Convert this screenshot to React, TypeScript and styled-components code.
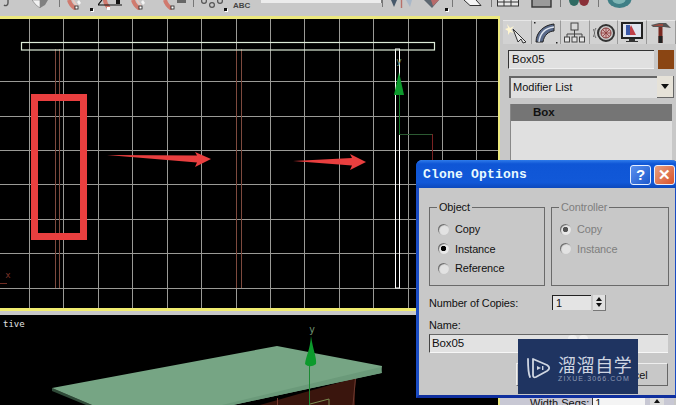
import styled, { createGlobalStyle } from "styled-components";

const GlobalStyle = createGlobalStyle`
  html, body {
    margin: 0;
    padding: 0;
    background: #000;
    overflow: hidden;
  }
  #root {
    width: 676px;
    height: 405px;
  }
`;

const GRID_X = [29, 63, 98, 132, 167, 201, 236, 270, 304, 339, 373, 408, 442, 476];
const GRID_Y = [81, 116, 150, 184, 219, 253, 288];

function TopViewCanvas() {
  return (
    <svg width="498" height="289" viewBox="0 19 498 289">
      {GRID_X.map((x) => (
        <line key={x} x1={x + 0.5} y1="19" x2={x + 0.5} y2="308" stroke="#9a9a96" />
      ))}
      {GRID_Y.map((y) => (
        <line key={y} x1="0" y1={y + 0.5} x2="498" y2={y + 0.5} stroke="#9a9a96" />
      ))}

      {[55, 59, 236, 241].map((x) => (
        <line key={x} x1={x + 0.5} y1="49" x2={x + 0.5} y2="288" stroke="#7e4a3e" />
      ))}
      <rect x="395.5" y="49" width="4" height="239" fill="none" stroke="#fff" />
      <rect x="21.5" y="42.5" width="413" height="7.5" fill="none" stroke="#dcebd8" strokeWidth="1.2" />

      <text x="399" y="64" fill="#6f8f6f" fontFamily="'DejaVu Sans Mono', monospace" fontSize="9" textAnchor="middle">y</text>
      <path d="M399 72 L394 95 L404 95 Z" fill="#0c9a2c" />
      <line x1="399.5" y1="95" x2="399.5" y2="134" stroke="#157a2a" />
      <path d="M399 134.5 H432" fill="none" stroke="#2c5a32" />
      <line x1="432.5" y1="134" x2="432.5" y2="160" stroke="#7a2222" />

      <text x="8" y="278" fill="#7c3328" fontFamily="'DejaVu Sans Mono', monospace" fontSize="9" textAnchor="middle">x</text>
      <line x1="0" y1="283.5" x2="7" y2="283.5" stroke="#6e2c22" />

      <rect x="34.5" y="97.5" width="49" height="139" fill="none" stroke="#e93f3f" strokeWidth="7" />
      <path d="M107 155 L197 155.5 L195 152 L211 159 L195 167 L197 162.5 Z" fill="#e93f3f" />
      <path d="M293 161 L352 158 L350 154 L366 162 L350 170 L352 165.5 Z" fill="#e93f3f" />
    </svg>
  );
}

function PerspectiveCanvas() {
  return (
    <svg width="498" height="90" viewBox="0 315 498 90">
      <path d="M260 405 L355 378 L355 405 Z" fill="#3a150d" />
      <path d="M345 380 H356 L353 405 H345 Z" fill="#3a150d" />
      <line x1="355.5" y1="378" x2="353" y2="405" stroke="#6e3a30" />
      <line x1="277.5" y1="398" x2="277.5" y2="405" stroke="#7a3a30" />
      <path d="M52 388 L92 405 L86 405 L52 391 Z" fill="#2f4a38" />
      <path d="M52 388 L277 346 L382 366 L381 373 L233 405 L92 405 Z" fill="#76a584" />
      <path d="M381 367 L382 373 L233 405 L222 405 Z" fill="#6b9a7a" />
      <text x="312" y="333" fill="#6f8f6f" fontFamily="'DejaVu Sans Mono', monospace" fontSize="10" textAnchor="middle">y</text>
      <path d="M311 336 C313 350 317 358 316 364 C312 367 308 367 305 364 C306 356 310 350 311 336 Z" fill="#0c9a2c" />
      <line x1="309.5" y1="366" x2="309.5" y2="405" stroke="#1c8a34" />
      <path d="M310 404 L329 399 V405" fill="none" stroke="#7a8a50" />
    </svg>
  );
}

const CornerMark = styled.span<{ $left: number }>`
  position: absolute;
  left: ${({ $left }) => $left}px;
  top: 8px;
  width: 3px;
  height: 3px;
  background: #111;
  box-shadow: 1px 1px 0 #fff;
`;

const DividerLine = styled.div`
  width: 1px;
  height: 7px;
  background: #777;
`;

function Divider() {
  return <DividerLine />;
}

const AbcLabel = styled.span`
  display: block;
  font-size: 8px;
  font-weight: 700;
  line-height: 9px;
  margin-top: 1px;
  color: #444;
`;

const snapIcon = (
  <svg width="16" height="10" viewBox="0 0 16 10">
    <path d="M2 0 C3 4 6 7 9 9" fill="none" stroke="#d07a6e" strokeWidth="4" />
    <path d="M6 0 C7 2 8 4 10 6" fill="none" stroke="#ecc8c0" strokeWidth="1.6" />
    <rect x="8" y="6" width="3" height="3" fill="#fff" stroke="#222" strokeWidth="0.8" />
    <path d="M12 0 L14 3 L12 5 L10 2 Z" fill="#f4f4f4" />
  </svg>
);

const TOOL_ICONS: { key: string; width: number; gap: number; node: React.ReactNode }[] = [
  {
    key: "undo",
    width: 8,
    gap: 3,
    node: (
      <svg width="8" height="8" viewBox="0 0 8 8">
        <path d="M5 0 V3 C5 6 2 6 1 5" fill="none" stroke="#555" strokeWidth="1.4" />
      </svg>
    ),
  },
  {
    key: "cube",
    width: 16,
    gap: 21,
    node: (
      <svg width="16" height="8" viewBox="0 0 16 8">
        <path d="M0 0 H8 V8 L4 5 Z" fill="#f2f2f2" stroke="#666" strokeWidth="0.5" />
        <path d="M8 0 H16 L13 5 L8 8 Z" fill="#808080" />
      </svg>
    ),
  },
  { key: "div1", width: 1, gap: 11, node: <Divider /> },
  { key: "snap1", width: 16, gap: 7, node: snapIcon },
  {
    key: "snap2",
    width: 24,
    gap: 15,
    node: (
      <svg width="24" height="10" viewBox="0 0 24 10">
        <path d="M7 0 C7 3 9 6 11 8" fill="none" stroke="#d07a6e" strokeWidth="4" />
        <path d="M0 5 L4 0 M0 5 H24" stroke="#111" strokeWidth="1.2" />
        <rect x="18" y="0" width="4" height="4" fill="#111" />
        <rect x="9" y="7" width="3" height="3" fill="#fff" />
      </svg>
    ),
  },
  { key: "snap3", width: 16, gap: 9, node: snapIcon },
  {
    key: "snap4",
    width: 24,
    gap: 16,
    node: (
      <svg width="24" height="10" viewBox="0 0 24 10">
        <path d="M2 0 C3 4 6 7 9 9" fill="none" stroke="#d07a6e" strokeWidth="4" />
        <rect x="8" y="6" width="3" height="3" fill="#fff" stroke="#222" strokeWidth="0.8" />
        <rect x="14" y="0" width="9" height="3" fill="#666" />
      </svg>
    ),
  },
  { key: "div2", width: 1, gap: 6, node: <Divider /> },
  {
    key: "sets",
    width: 22,
    gap: 7,
    node: (
      <svg width="22" height="8" viewBox="0 0 22 8">
        <g fill="none" stroke="#555" strokeWidth="1.2">
          <circle cx="3" cy="1" r="2.4" />
          <circle cx="11" cy="5" r="2.4" />
          <circle cx="19" cy="1" r="2.4" />
        </g>
      </svg>
    ),
  },
  {
    key: "abc",
    width: 28,
    gap: 10,
    node: <AbcLabel>ABC</AbcLabel>,
  },
];

const RIGHT_ICONS: { key: string; width: number; gap: number; node: React.ReactNode }[] = [
  { key: "div3", width: 1, gap: 0, node: <Divider /> },
  {
    key: "mirror",
    width: 22,
    gap: 8,
    node: (
      <svg width="22" height="9" viewBox="0 0 22 9">
        <path d="M0 0 L3 7 L6 0 Z" fill="#46586a" />
        <line x1="10.5" y1="0" x2="10.5" y2="8" stroke="#b8716a" strokeWidth="1.4" />
        <path d="M15 0 L19 7 L21 0 Z" fill="#a9b8c8" />
      </svg>
    ),
  },
  {
    key: "align",
    width: 15,
    gap: 11,
    node: (
      <svg width="15" height="8" viewBox="0 0 15 8">
        <path d="M0 0 H15 L8 8 Z" fill="#5c6670" />
        <path d="M7 0 H15 L9 6 Z" fill="#b86a6a" />
      </svg>
    ),
  },
  { key: "div4", width: 1, gap: 13, node: <Divider /> },
  {
    key: "curve",
    width: 18,
    gap: 11,
    node: (
      <svg width="18" height="7" viewBox="0 0 18 7">
        <path d="M0 0 L6 5.5 H17 L12 0" fill="#f4f4f4" stroke="#333" strokeWidth="1" />
      </svg>
    ),
  },
  { key: "div5", width: 1, gap: 9, node: <Divider /> },
  {
    key: "schematic",
    width: 22,
    gap: 5,
    node: (
      <svg width="22" height="7" viewBox="0 0 22 7">
        <rect x="0.5" y="-2" width="21" height="8" fill="#e8e8e8" stroke="#333" />
        <path d="M7 -2 V6 M14 -2 V6 M0 2 H22" stroke="#333" />
      </svg>
    ),
  },
  {
    key: "material",
    width: 21,
    gap: 12,
    node: (
      <svg width="21" height="8" viewBox="0 0 21 8">
        <rect x="1" y="-2" width="19" height="9" fill="#9a9a9a" stroke="#333" strokeWidth="1.4" />
      </svg>
    ),
  },
  { key: "div6", width: 1, gap: 8, node: <Divider /> },
  {
    key: "render",
    width: 20,
    gap: 8,
    node: (
      <svg width="20" height="7" viewBox="0 0 20 7">
        <ellipse cx="5" cy="0" rx="5" ry="6" fill="#2f6a62" />
        <ellipse cx="15" cy="0" rx="5" ry="6" fill="#8a3038" />
      </svg>
    ),
  },
  { key: "div7", width: 1, gap: 9, node: <Divider /> },
  {
    key: "teapot",
    width: 25,
    gap: 8,
    node: (
      <svg width="25" height="8" viewBox="0 0 25 8">
        <ellipse cx="12.5" cy="-1" rx="12" ry="9" fill="#3f7f86" />
        <ellipse cx="12" cy="-2" rx="7" ry="6" fill="#7eb4b4" />
      </svg>
    ),
  },
];

function CreateTabIcon() {
  return (
    <svg width="24" height="22" viewBox="0 0 24 22">
      <path d="M2 2 L5 6 L9 4 L6 8 L9 11 L5 10 L3 13 L3 9 L0 7 L3 6 Z" fill="#fff6d0" />
      <path d="M8 7 L21 20 L18 21 L16 17 L13 20 Z" fill="#e8e8e8" stroke="#333" strokeWidth="1" />
    </svg>
  );
}

function ModifyTabIcon() {
  return (
    <svg width="24" height="22" viewBox="0 0 24 22">
      <path d="M2 20 C2 10 10 3 20 2 L20 9 C15 9 10 13 9 20 Z" fill="#5a6a8a" stroke="#222" strokeWidth="1" />
      <path d="M5 20 C6 11 12 6 20 5" fill="none" stroke="#dfe6f0" strokeWidth="1.4" />
      <rect x="0" y="0" width="1.5" height="1.5" fill="#222" />
      <rect x="22" y="20" width="1.5" height="1.5" fill="#222" />
    </svg>
  );
}

function HierarchyTabIcon() {
  return (
    <svg width="22" height="22" viewBox="0 0 22 22">
      <rect x="7" y="1" width="7" height="7" fill="#d8d8d8" stroke="#444" />
      <path d="M10.5 8 V12 M3 15 V12 H18 V15 M10.5 12 V15" fill="none" stroke="#444" />
      <g fill="#e4e4e4" stroke="#444">
        <rect x="0.5" y="15" width="5" height="5" />
        <rect x="8" y="15" width="5" height="5" />
        <rect x="15.5" y="15" width="5" height="5" />
      </g>
    </svg>
  );
}

function MotionTabIcon() {
  return (
    <svg width="22" height="20" viewBox="0 0 22 20">
      <circle cx="13" cy="10" r="8" fill="#c8c8c8" stroke="#333" strokeWidth="2" />
      <circle cx="13" cy="10" r="5" fill="#d4b0b0" stroke="#8a3a3a" />
      <path d="M13 5 V15 M8 10 H18 M9.5 6.5 L16.5 13.5 M16.5 6.5 L9.5 13.5" stroke="#8a3a3a" strokeWidth="0.8" />
      <path d="M3 5 C1 8 1 12 3 15 M1 6 C-1 9 -1 11 1 14" fill="none" stroke="#666" />
    </svg>
  );
}

function DisplayTabIcon() {
  return (
    <svg width="22" height="22" viewBox="0 0 22 22">
      <rect x="1" y="1" width="20" height="15" fill="#e0e4ee" stroke="#222" strokeWidth="2" />
      <path d="M6 13 L10 3 L15 13 Z" fill="#c04048" />
      <rect x="5" y="3" width="4" height="10" fill="#3a58a8" />
      <path d="M8 17 H14 V19 H17 V20 H5 V19 H8 Z" fill="#333" />
    </svg>
  );
}

function UtilityTabIcon() {
  return (
    <svg width="22" height="22" viewBox="0 0 22 22">
      <path d="M1 3 L9 1 H16 L21 6 L14 5 H3 Z" fill="#555" />
      <path d="M2 4 L9 2 L13 2 L13 4 Z" fill="#9a4a40" />
      <rect x="8.5" y="5" width="4" height="16" fill="#7a2a22" />
      <rect x="8.5" y="14" width="4" height="7" fill="#222" />
    </svg>
  );
}

function WatermarkLogo() {
  return (
    <svg width="25" height="24" viewBox="0 0 25 24">
      <path d="M2 3 C2 12 2 17 4 21" fill="none" stroke="#cfd6e2" strokeWidth="1.8" strokeLinecap="round" />
      <path
        d="M7 3 L21 9 C24 11 24 13 21 15 L10 21 C8 22 7 21 7 19 Z"
        fill="none"
        stroke="#cfd6e2"
        strokeWidth="1.8"
        strokeLinejoin="round"
      />
      <path d="M11 10 L15 12 L11 14 Z" fill="#cfd6e2" />
      <rect x="16" y="10" width="1.4" height="4" fill="#cfd6e2" />
    </svg>
  );
}

const Page = styled.div`
  position: relative;
  width: 676px;
  height: 405px;
  overflow: hidden;
  display: flex;
  flex-direction: column;
  background: #000;
  font-family: "Liberation Sans", Arial, sans-serif;
`;

const Toolbar = styled.div`
  position: relative;
  height: 16px;
  flex: none;
  display: flex;
  align-items: flex-start;
  background: #c8c8c8;
  overflow: hidden;
`;

const ToolSlot = styled.div<{ $width: number; $gap: number }>`
  width: ${({ $width }) => $width}px;
  margin-left: ${({ $gap }) => $gap}px;
  flex: none;
  height: 12px;
  svg {
    display: block;
  }
`;

const SearchField = styled.div`
  width: 120px;
  height: 3px;
  flex: none;
  background: #ececec;
  border-right: 1px solid #777;
`;

const Main = styled.div`
  flex: 1;
  min-height: 0;
  display: flex;
`;

const Viewports = styled.div`
  width: 498px;
  flex: none;
  display: flex;
  flex-direction: column;
  background: #000;
`;

const ActiveView = styled.div`
  height: 289px;
  flex: none;
  border-top: 3px solid #ece87e;
  border-bottom: 3px solid #f0ec70;
  background: #000;
  svg {
    display: block;
  }
`;

const ViewSeparator = styled.div`
  height: 4px;
  flex: none;
  background: #c8c8c8;
`;

const PerspectiveView = styled.div`
  position: relative;
  flex: 1;
  min-height: 0;
  background: #000;
  overflow: hidden;
  svg {
    display: block;
  }
`;

const ViewLabel = styled.span`
  position: absolute;
  left: 3px;
  top: 3px;
  color: #e4e4e4;
  font-family: "DejaVu Sans Mono", monospace;
  font-size: 9px;
  line-height: 12px;
`;

const CommandPanel = styled.div`
  flex: 1;
  min-width: 0;
  display: flex;
  flex-direction: column;
  padding: 4px 2px 0 0;
  background: #c8c8c8;
  border-left: 2px solid #ece87e;
`;

const TabRow = styled.div`
  display: grid;
  grid-template-columns: 29px 29px 29px 28px 29px 29px;
  height: 24px;
  margin-left: 3px;
  flex: none;
`;

const Tab = styled.div`
  display: flex;
  align-items: center;
  justify-content: center;
  background: #d2d2d2;
  border-right: 1px solid #9a9a9a;
  border-top: 1px solid #e6e6e6;
`;

const NameRow = styled.div`
  display: flex;
  gap: 4px;
  margin: 6px 0 0 8px;
  height: 19px;
  flex: none;
`;

const NameField = styled.div`
  flex: 1;
  box-sizing: border-box;
  padding-left: 3px;
  background: #e0e0e0;
  border-top: 1px solid #333;
  border-left: 1px solid #333;
  border-bottom: 1px solid #f0f0f0;
  font-size: 11.5px;
  line-height: 17px;
  color: #111;
`;

const ColorSwatch = styled.div`
  width: 16px;
  flex: none;
  background: #8a4513;
`;

const ModifierSelect = styled.div`
  display: flex;
  margin: 7px 0 0 9px;
  height: 22px;
  flex: none;
`;

const ModifierLabel = styled.div`
  flex: 1;
  box-sizing: border-box;
  padding-left: 2px;
  background: #e0e0e0;
  border-top: 2px solid #666;
  border-left: 2px solid #666;
  font-size: 11px;
  line-height: 19px;
  color: #111;
`;

const ModifierArrow = styled.div`
  width: 16px;
  flex: none;
  display: flex;
  align-items: center;
  justify-content: center;
  background: #e6e2d8;
  border-right: 1px solid #666;
  border-bottom: 1px solid #666;
  &::after {
    content: "";
    border-left: 4px solid transparent;
    border-right: 4px solid transparent;
    border-top: 5px solid #111;
  }
`;

const StackBox = styled.div`
  flex: 1;
  min-height: 0;
  margin: 6px 2px 0 10px;
  background: #e0e0e0;
  border-left: 1px solid #888;
`;

const StackItem = styled.div`
  height: 17px;
  padding-left: 22px;
  background: #757575;
  color: #111;
  font-size: 11.5px;
  font-weight: 700;
  line-height: 17px;
`;

const ParamRow = styled.div`
  height: 8px;
  flex: none;
  display: flex;
  align-items: flex-start;
  gap: 3px;
  padding-left: 30px;
  background: #c8c8d4;
  font-size: 11px;
  line-height: 13px;
  color: #111;
`;

const ParamInput = styled.div`
  width: 50px;
  height: 8px;
  padding-left: 2px;
  background: #f4f4f4;
  border-left: 1px solid #333;
`;

const ParamSpin = styled.div`
  width: 14px;
  height: 8px;
  margin-left: 2px;
  background: #ddd;
  text-align: center;
  &::after {
    content: "";
    display: inline-block;
    border-left: 3px solid transparent;
    border-right: 3px solid transparent;
    border-bottom: 4px solid #111;
    vertical-align: top;
    margin-top: 2px;
  }
`;

const Dialog = styled.div`
  position: absolute;
  left: 416px;
  top: 160px;
  width: 262px;
  height: 238px;
  box-sizing: border-box;
  display: flex;
  flex-direction: column;
  background: #c8c8c8;
  border: 3px solid #1a4cc4;
  border-top: none;
  border-bottom-color: #0f2f9e;
  border-radius: 6px 6px 0 0;
`;

const TitleBar = styled.div`
  height: 28px;
  box-sizing: border-box;
  flex: none;
  display: flex;
  align-items: center;
  justify-content: space-between;
  margin: 0 -3px;
  padding: 1px 3px 0 7px;
  background: linear-gradient(#2f7bea, #0f56d6 14%, #1158d8 80%, #0c48bc);
  border-radius: 6px 6px 0 0;
`;

const TitleText = styled.span`
  color: #e8fbff;
  font-family: "Liberation Mono", monospace;
  font-size: 13px;
  font-weight: 700;
  letter-spacing: 0.2px;
`;

const TitleButtons = styled.div`
  display: flex;
  gap: 3px;
`;

const TitleButton = styled.div<{ $danger?: boolean }>`
  width: 21px;
  height: 20px;
  box-sizing: border-box;
  display: flex;
  align-items: center;
  justify-content: center;
  border: 1px solid #e8f0ff;
  border-radius: 3px;
  background: ${({ $danger }) =>
    $danger ? "linear-gradient(135deg, #e8a080, #d8522c)" : "linear-gradient(135deg, #5a90ee, #1c58cc)"};
  color: #fff;
  font-size: 15px;
  font-weight: 700;
`;

const DialogBody = styled.div`
  flex: 1;
  display: flex;
  flex-direction: column;
  padding: 13px 6px 0 10px;
  color: #111;
  font-size: 10.9px;
  letter-spacing: -0.1px;
`;

const GroupRow = styled.div`
  display: grid;
  grid-template-columns: 116px 118px;
  gap: 6px;
`;

const GroupBox = styled.fieldset<{ $disabled?: boolean }>`
  box-sizing: border-box;
  height: 85px;
  margin: 0;
  padding: 9px 0 0 8px;
  border: 1px solid #6a6a6a;
  color: ${({ $disabled }) => ($disabled ? "#7e7e7e" : "#111")};
  legend {
    padding: 0 2px;
    margin-left: -1px;
    line-height: 12px;
  }
`;

const RadioList = styled.div`
  display: flex;
  flex-direction: column;
  gap: 5.5px;
`;

const RadioRow = styled.div`
  display: flex;
  align-items: center;
  gap: 6px;
  height: 14px;
`;

const RadioDot = styled.span<{ $on?: boolean; $disabled?: boolean }>`
  width: 11px;
  height: 11px;
  flex: none;
  border-radius: 50%;
  background: ${({ $on, $disabled }) =>
    $on
      ? `radial-gradient(circle, ${$disabled ? "#555" : "#000"} 2.4px, #e8e8e8 3px)`
      : "#e2e2e2"};
  box-shadow: inset 1px 1px 1px #666;
`;

const CopiesRow = styled.div`
  display: flex;
  align-items: center;
  margin-top: 8px;
  height: 17px;
`;

const CopiesLabel = styled.span`
  width: 123px;
  flex: none;
`;

const CopiesInput = styled.div`
  width: 39px;
  height: 15px;
  box-sizing: border-box;
  padding-left: 3px;
  background: #e4e4e4;
  border-top: 1px solid #222;
  border-left: 1px solid #222;
  line-height: 14px;
`;

const SpinButton = styled.div`
  width: 12px;
  height: 15px;
  margin-left: 2px;
  display: flex;
  flex-direction: column;
  align-items: center;
  justify-content: center;
  gap: 2px;
  background: #e0e0e0;
  border-right: 1px solid #777;
  border-bottom: 1px solid #777;
  &::before,
  &::after {
    content: "";
    border-left: 3px solid transparent;
    border-right: 3px solid transparent;
  }
  &::before {
    border-bottom: 4px solid #111;
  }
  &::after {
    border-top: 4px solid #111;
  }
`;

const NameLabel = styled.div`
  margin-top: 8px;
  line-height: 13px;
`;

const NameInput = styled.div`
  width: 239px;
  height: 19px;
  box-sizing: border-box;
  margin-top: 2px;
  padding-left: 2px;
  background: #e2e2e2;
  border-top: 1px solid #666;
  border-left: 1px solid #444;
  border-bottom: 1px solid #f6f6f6;
  font-size: 11.5px;
  line-height: 17px;
`;

const ButtonRow = styled.div`
  display: flex;
  justify-content: flex-end;
  gap: 4px;
  width: 239px;
  margin-top: 10px;
`;

const DialogButton = styled.div`
  width: 74px;
  height: 23px;
  display: flex;
  align-items: center;
  justify-content: center;
  background: #c8c8c8;
  border: 1px solid #eee;
  border-right-color: #666;
  border-bottom-color: #666;
  box-sizing: border-box;
`;

const Watermark = styled.div`
  position: absolute;
  left: 518px;
  top: 339px;
  width: 120px;
  height: 55px;
  box-sizing: border-box;
  display: flex;
  align-items: center;
  gap: 7px;
  padding: 3px 0 0 8px;
  background: #1f3461;
  color: #cfd6e2;
  &::before,
  &::after {
    content: "";
    position: absolute;
    top: -4px;
    width: 9px;
    height: 4px;
    border-radius: 4px 4px 0 0;
    background: #f0f0f0;
  }
  &::before {
    left: 50px;
  }
  &::after {
    left: 61px;
  }
`;

const WatermarkText = styled.div`
  display: flex;
  flex-direction: column;
  gap: 1px;
`;

const WatermarkTitle = styled.span`
  font-family: "Noto Sans CJK SC", sans-serif;
  font-size: 18px;
  line-height: 20px;
  letter-spacing: 0.6px;
  white-space: nowrap;
`;

const WatermarkUrl = styled.span`
  font-family: "Liberation Sans", sans-serif;
  font-size: 7px;
  line-height: 8px;
  letter-spacing: 1.1px;
  color: #8f9bb4;
  white-space: nowrap;
`;

export default function App() {
  return (
    <Page>
      <GlobalStyle />
      <Toolbar>
        {TOOL_ICONS.map((icon) => (
          <ToolSlot key={icon.key} $width={icon.width} $gap={icon.gap}>
            {icon.node}
          </ToolSlot>
        ))}
        <SearchField />
        {RIGHT_ICONS.map((icon) => (
          <ToolSlot key={icon.key} $width={icon.width} $gap={icon.gap}>
            {icon.node}
          </ToolSlot>
        ))}
        <CornerMark $left={90} />
        <CornerMark $left={224} />
        <CornerMark $left={445} />
      </Toolbar>
      <Main>
        <Viewports>
          <ActiveView>
            <TopViewCanvas />
          </ActiveView>
          <ViewSeparator />
          <PerspectiveView>
            <PerspectiveCanvas />
            <ViewLabel>tive</ViewLabel>
          </PerspectiveView>
        </Viewports>
        <CommandPanel>
          <TabRow>
            <Tab><CreateTabIcon /></Tab>
            <Tab><ModifyTabIcon /></Tab>
            <Tab><HierarchyTabIcon /></Tab>
            <Tab><MotionTabIcon /></Tab>
            <Tab><DisplayTabIcon /></Tab>
            <Tab><UtilityTabIcon /></Tab>
          </TabRow>
          <NameRow>
            <NameField>Box05</NameField>
            <ColorSwatch />
          </NameRow>
          <ModifierSelect>
            <ModifierLabel>Modifier List</ModifierLabel>
            <ModifierArrow />
          </ModifierSelect>
          <StackBox>
            <StackItem>Box</StackItem>
          </StackBox>
          <ParamRow>
            <span>Width Segs:</span>
            <ParamInput>1</ParamInput>
            <ParamSpin />
          </ParamRow>
        </CommandPanel>
      </Main>

      <Dialog>
        <TitleBar>
          <TitleText>Clone Options</TitleText>
          <TitleButtons>
            <TitleButton>?</TitleButton>
            <TitleButton $danger>✕</TitleButton>
          </TitleButtons>
        </TitleBar>
        <DialogBody>
          <GroupRow>
            <GroupBox>
              <legend>Object</legend>
              <RadioList>
                <RadioRow><RadioDot />Copy</RadioRow>
                <RadioRow><RadioDot $on />Instance</RadioRow>
                <RadioRow><RadioDot />Reference</RadioRow>
              </RadioList>
            </GroupBox>
            <GroupBox $disabled>
              <legend>Controller</legend>
              <RadioList>
                <RadioRow><RadioDot $on $disabled />Copy</RadioRow>
                <RadioRow><RadioDot $disabled />Instance</RadioRow>
              </RadioList>
            </GroupBox>
          </GroupRow>
          <CopiesRow>
            <CopiesLabel>Number of Copies:</CopiesLabel>
            <CopiesInput>1</CopiesInput>
            <SpinButton />
          </CopiesRow>
          <NameLabel>Name:</NameLabel>
          <NameInput>Box05</NameInput>
          <ButtonRow>
            <DialogButton>OK</DialogButton>
            <DialogButton>Cancel</DialogButton>
          </ButtonRow>
        </DialogBody>
      </Dialog>

      <Watermark>
        <WatermarkLogo />
        <WatermarkText>
          <WatermarkTitle>溜溜自学</WatermarkTitle>
          <WatermarkUrl>ZIXUE.3066.COM</WatermarkUrl>
        </WatermarkText>
      </Watermark>
    </Page>
  );
}
